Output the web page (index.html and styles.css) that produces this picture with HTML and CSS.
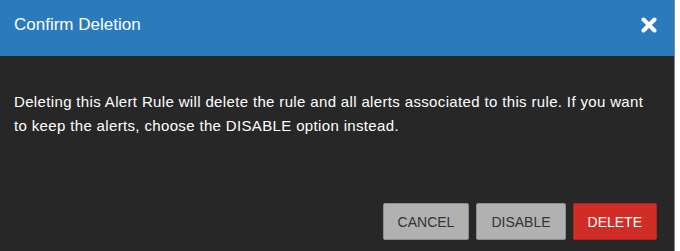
FILE: index.html
```html
<!DOCTYPE html>
<html>
<head>
<meta charset="utf-8">
<link rel="stylesheet" href="styles.css">
</head>
<body>
<div class="dialog">
  <div class="header">
    <div class="title">Confirm Deletion</div>
    <button class="close" aria-label="Close">
      <svg width="16" height="16" viewBox="0 0 16 16"><path d="M2.5 2.5 L13.5 13.5 M13.5 2.5 L2.5 13.5" stroke="#fff" stroke-width="4" stroke-linecap="round"/></svg>
    </button>
  </div>
  <div class="body">
    <p class="message">Deleting this Alert Rule will delete the rule and all alerts associated to this rule. If you want to keep the alerts, choose the DISABLE option instead.</p>
    <div class="actions">
      <button class="btn btn-grey">CANCEL</button>
      <button class="btn btn-grey">DISABLE</button>
      <button class="btn btn-red">DELETE</button>
    </div>
  </div>
</div>
</body>
</html>
```
FILE: styles.css
```css
html, body {
  margin: 0;
  padding: 0;
  background: #ffffff;
  font-family: "Liberation Sans", Arial, sans-serif;
}
.dialog {
  width: 674px;
  height: 251px;
  border-right: 1px solid #8a8a8a;
  display: flex;
  flex-direction: column;
  background: #272727;
}
.header {
  height: 56px;
  background: #2a7abc;
  display: flex;
  align-items: center;
  justify-content: space-between;
  padding: 0 17px 0 14px;
  box-sizing: border-box;
}
.title {
  color: #fff;
  font-size: 17px;
  margin-top: -6px;
}
.close {
  background: none;
  border: 0;
  padding: 0;
  width: 16px;
  height: 16px;
  display: flex;
  margin-top: -6px;
}
.body {
  flex: 1;
  display: flex;
  flex-direction: column;
  padding: 34px 17px 10px 14px;
}
.message {
  margin: 0;
  width: 636px;
  color: #fff;
  font-size: 15px;
  letter-spacing: 0.35px;
  line-height: 24px;
}
.actions {
  margin-top: auto;
  display: flex;
  justify-content: flex-end;
  gap: 7px;
  padding-bottom: 1px;
}
.btn {
  height: 37px;
  font-family: "Liberation Sans", Arial, sans-serif;
  font-size: 14px;
  border-radius: 2px;
  padding: 0 14px;
  cursor: pointer;
}
.btn-grey {
  background: #b1b1b1;
  border: 1px solid #8e8e8e;
  color: #333;
}
.btn-red {
  background: #d12d27;
  border: 1px solid #b32420;
  color: #fff;
}
```
